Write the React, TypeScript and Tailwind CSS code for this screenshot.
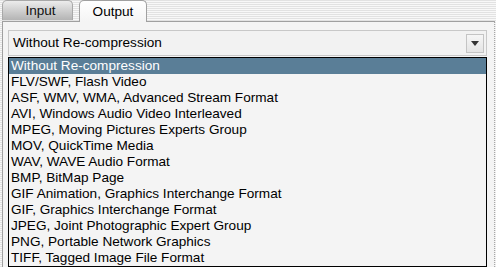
import { useState } from "react";

const FORMATS = [
  "Without Re-compression",
  "FLV/SWF, Flash Video",
  "ASF, WMV, WMA, Advanced Stream Format",
  "AVI, Windows Audio Video Interleaved",
  "MPEG, Moving Pictures Experts Group",
  "MOV, QuickTime Media",
  "WAV, WAVE Audio Format",
  "BMP, BitMap Page",
  "GIF Animation, Graphics Interchange Format",
  "GIF, Graphics Interchange Format",
  "JPEG, Joint Photographic Expert Group",
  "PNG, Portable Network Graphics",
  "TIFF, Tagged Image File Format",
];

export default function App() {
  const [tab, setTab] = useState<"input" | "output">("output");
  const [selected, setSelected] = useState(0);

  return (
    <div className="w-[496px] h-[267px] overflow-hidden bg-[repeating-linear-gradient(to_bottom,#e2e2e2_0px,#e2e2e2_1px,#f8f8f8_1px,#f8f8f8_2px)] font-['Liberation_Sans',Arial,sans-serif] text-[13.6px] text-black flex flex-col">
      {/* tab strip */}
      <div className="h-[22px] flex items-end pl-[2px] gap-[6px]">
        <button
          onClick={() => setTab("input")}
          className={`w-[71px] h-[20px] mb-[1px] rounded-t-[5px] border border-b-0 border-[#a8a8a8] bg-gradient-to-b from-[#ececec] to-[#b4b4b4] leading-[18px] pl-[6px] ${
            tab === "input" ? "text-black" : "text-[#111]"
          }`}
        >
          Input
        </button>
        <button
          onClick={() => setTab("output")}
          className="w-[68px] h-[22px] -mb-[1px] rounded-t-[5px] border border-b-0 border-[#a0a0a0] bg-gradient-to-b from-white to-[#f4f4f4] leading-[20px] relative z-10"
        >
          Output
        </button>
      </div>
      {/* panel */}
      <div className="flex-1 ml-[2px] mr-[1px] border-t border-l border-r border-[#a0a0a0] border-r-[#a8a8a8] [border-right-style:dotted] bg-[#f4f4f4] flex flex-col pl-[5px] pr-[7px] pt-[8px]">
        <div className="h-[26px] border border-[#c8c8c8] bg-[#f2f2f2] flex items-center pl-[4px] pr-[2px]">
          <span className="flex-1">{FORMATS[selected]}</span>
          <div className="w-[18px] h-[19px] border border-[#c4c4c4] bg-gradient-to-b from-[#f6f6f6] to-[#e4e4e4] flex items-center justify-center">
            <svg width="8" height="5" viewBox="0 0 8 5">
              <polygon points="0,0 8,0 4,5" fill="#333" />
            </svg>
          </div>
        </div>
        <div className="mt-[1px] flex-1 border border-black bg-[#f4f4f4]">
          {FORMATS.map((f, i) => (
            <div
              key={f}
              onClick={() => setSelected(i)}
              className={`h-[16px] leading-[16px] pl-[2px] ${
                i === selected ? "bg-[#5a7e97] text-white" : ""
              }`}
            >
              {f}
            </div>
          ))}
        </div>
      </div>
    </div>
  );
}
